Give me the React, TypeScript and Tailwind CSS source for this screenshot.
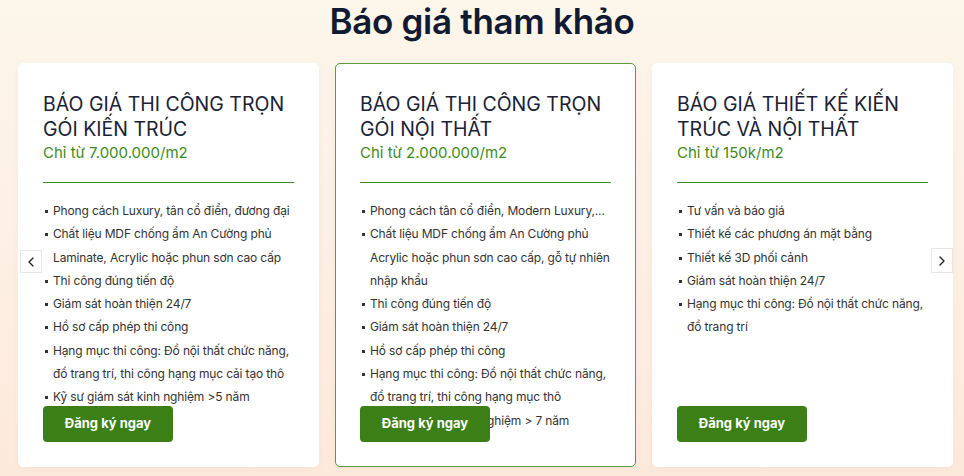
import { ChevronLeft, ChevronRight } from 'lucide-react';

const plans = [
    {
        title: 'Báo giá thi công trọn gói kiến trúc',
        price: 'Chỉ từ 7.000.000/m2',
        items: [
            'Phong cách Luxury, tân cổ điển, đương đại',
            'Chất liệu MDF chống ẩm An Cường phủ Laminate, Acrylic hoặc phun sơn cao cấp',
            'Thi công đúng tiến độ',
            'Giám sát hoàn thiện 24/7',
            'Hồ sơ cấp phép thi công',
            'Hạng mục thi công: Đồ nội thất chức năng, đồ trang trí, thi công hạng mục cải tạo thô',
            'Kỹ sư giám sát kinh nghiệm >5 năm',
        ],
        active: false,
    },
    {
        title: 'Báo giá thi công trọn gói nội thất',
        price: 'Chỉ từ 2.000.000/m2',
        items: [
            'Phong cách tân cổ điển, Modern Luxury,...',
            'Chất liệu MDF chống ẩm An Cường phủ Acrylic hoặc phun sơn cao cấp, gỗ tự nhiên nhập khẩu',
            'Thi công đúng tiến độ',
            'Giám sát hoàn thiện 24/7',
            'Hồ sơ cấp phép thi công',
            'Hạng mục thi công: Đồ nội thất chức năng, đồ trang trí, thi công hạng mục thô',
            'Kỹ sư giám sát kinh nghiệm > 7 năm',
        ],
        active: true,
    },
    {
        title: 'Báo giá thiết kế kiến trúc và nội thất',
        price: 'Chỉ từ 150k/m2',
        items: [
            'Tư vấn và báo giá',
            'Thiết kế các phương án mặt bằng',
            'Thiết kế 3D phối cảnh',
            'Giám sát hoàn thiện 24/7',
            'Hạng mục thi công: Đồ nội thất chức năng, đồ trang trí',
        ],
        active: false,
    },
];

export default function App() {
    return (
        <section
            className="w-[964px] h-[476px] overflow-hidden bg-gradient-to-b from-[#fdf6eb] to-[#fde9dc] text-[#1b2236]"
            style={{ fontFamily: 'Inter, "Open Sans", sans-serif' }}
        >
            <h2 className="text-center text-[35px] leading-[42px] font-semibold tracking-[-0.3px] text-[#111a33]">
                Báo giá tham khảo
            </h2>

            <div className="relative mt-[21px]">
                <div className="flex gap-4 pl-[18px]">
                    {plans.map((plan, idx) => (
                        <div
                            key={idx}
                            className={`relative w-[301px] h-[404px] shrink-0 bg-white rounded-[5px] px-6 pt-[28px] shadow-[0_2px_10px_rgba(0,0,0,0.03)] ${
                                plan.active ? 'border border-[#5c9a3c]' : 'border border-white'
                            }`}
                        >
                            <h3 className="uppercase text-[19.5px] leading-[24.5px] font-normal text-[#1b2236]">
                                {plan.title}
                            </h3>
                            <p className="mt-[2px] text-[15px] leading-[20px] text-[#3f8a22]">{plan.price}</p>
                            <div className="mt-[19px] h-px bg-[#3f8a22]" />

                            <ul className="mt-[16px] text-[12px] leading-[23.3px] tracking-[-0.15px] text-[#333333]">
                                {plan.items.map((item, i) => (
                                    <li key={i} className="relative pl-[10px]">
                                        <span className="absolute left-[2px] top-[11px] w-[3px] h-[3px] bg-[#333333]" />
                                        {item}
                                    </li>
                                ))}
                            </ul>

                            <button className="absolute left-6 bottom-6 w-[130px] h-9 rounded-[4px] bg-[#3b7f16] text-white text-[13px] font-bold">
                                Đăng ký ngay
                            </button>
                        </div>
                    ))}
                </div>

                <button className="absolute left-[20px] top-[187px] w-[22px] h-[23px] bg-white border border-[#e6e6e6] flex items-center justify-center text-[#222]">
                    <ChevronLeft size={16} strokeWidth={2} />
                </button>
                <button className="absolute left-[931px] top-[185px] w-[22px] h-[25px] bg-white border border-[#e6e6e6] flex items-center justify-center text-[#222]">
                    <ChevronRight size={16} strokeWidth={2} />
                </button>
            </div>
        </section>
    );
}
